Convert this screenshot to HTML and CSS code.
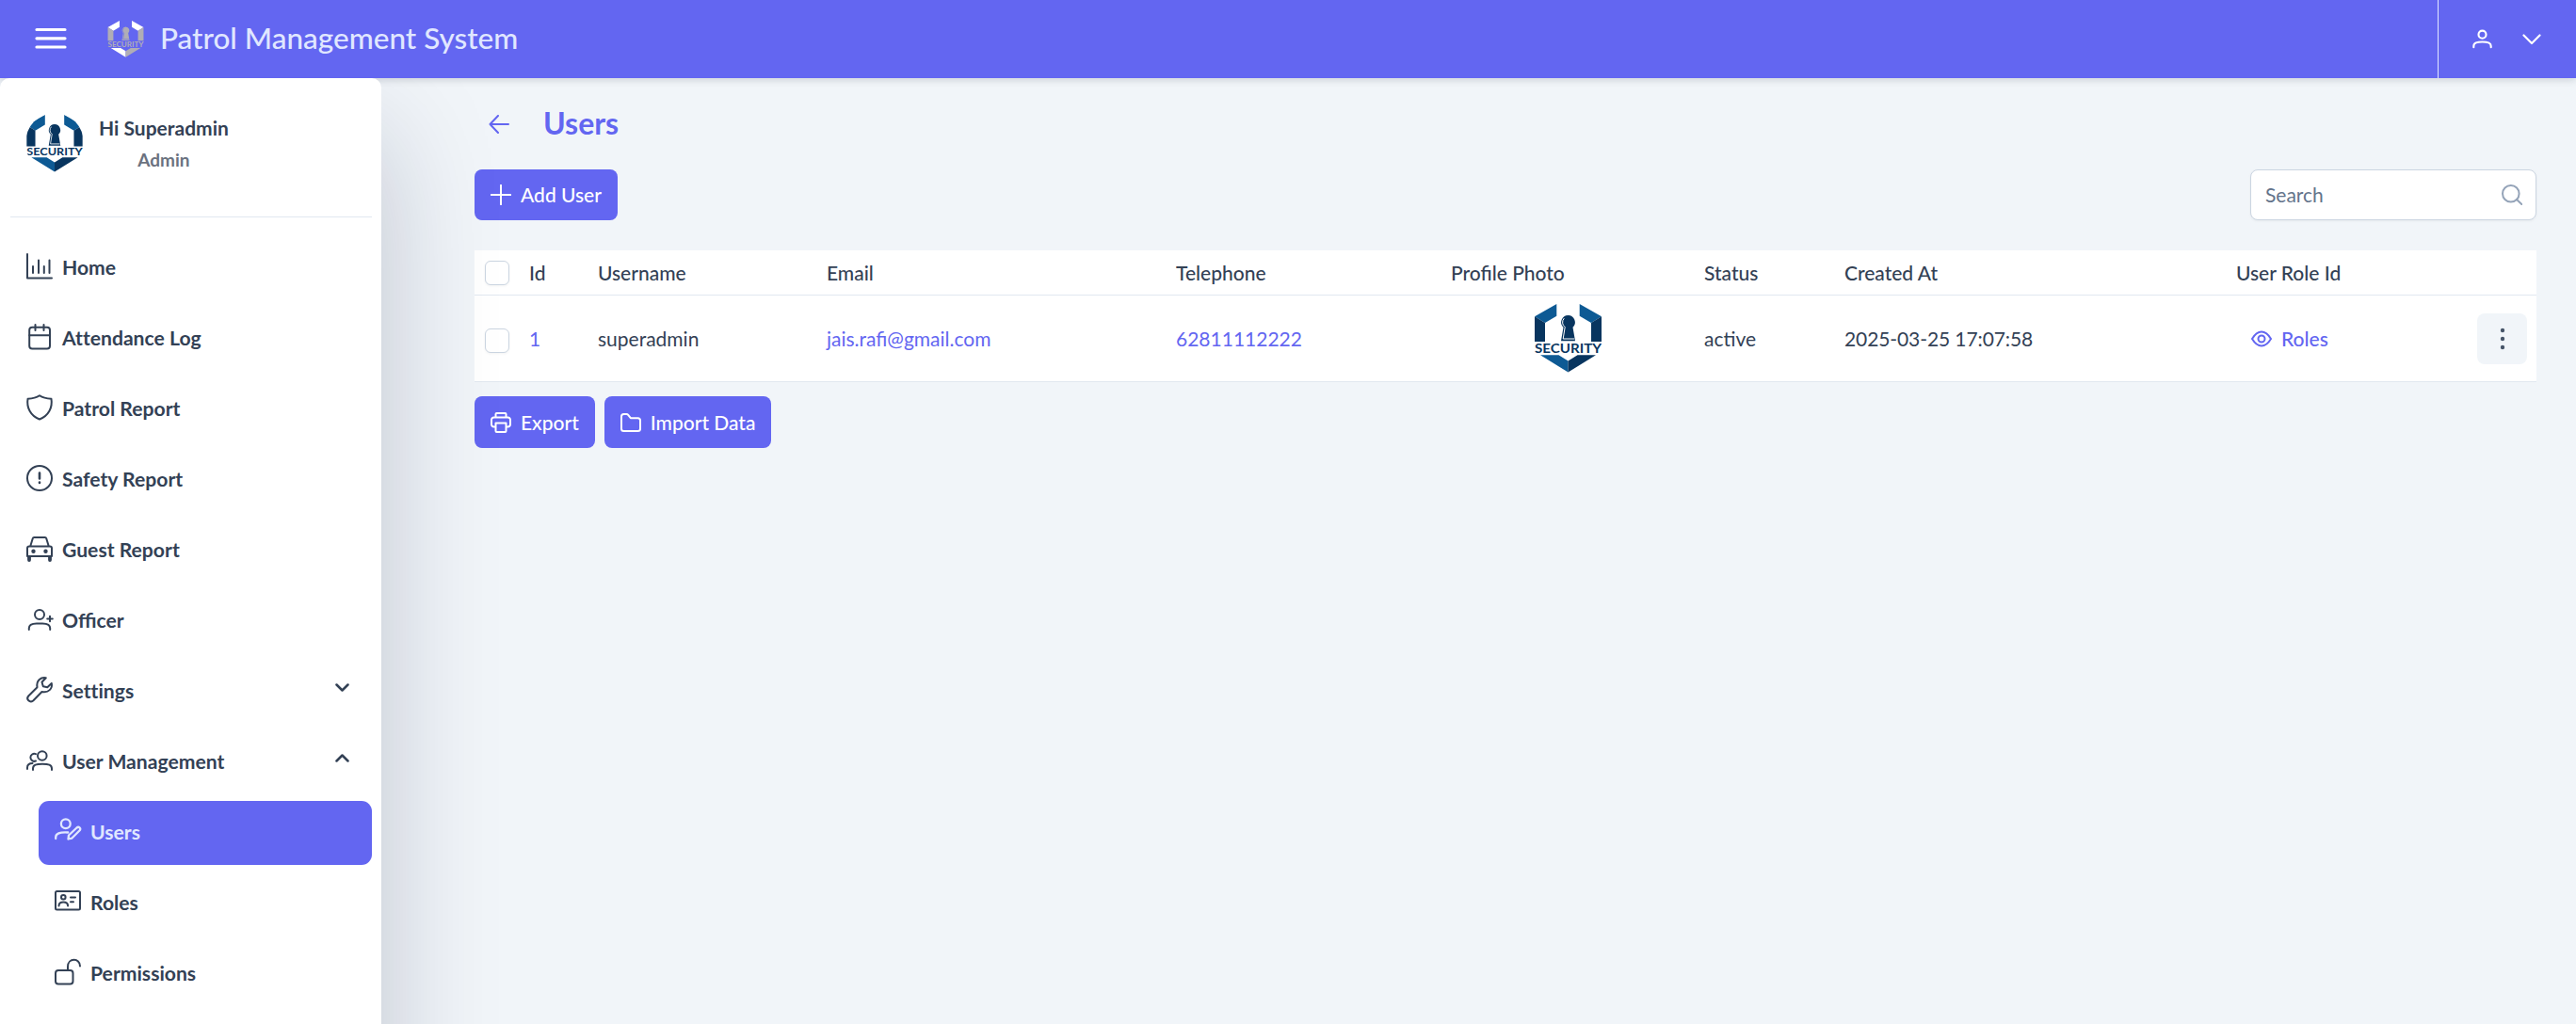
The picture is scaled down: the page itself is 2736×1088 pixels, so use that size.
FILE: index.html
```html
<!DOCTYPE html>
<html lang="en">
<head>
<meta charset="utf-8">
<title>Patrol Management System</title>
<link rel="stylesheet" href="styles.css">
</head>
<body>
<svg class="defs" width="0" height="0">
  <symbol id="logo" viewBox="0 0 71 73">
    <path class="lt" d="M0 13.3 23.3 0v12.7L11 20zM71 13.3 47.7 0v12.7L60 20zM6 54.3h19.5l10 6.2v12z"/>
    <path class="dk" d="M0 13.3 11 20v20H0zM71 13.3 60 20v20H71zM65 54.3H45.5l-10 6.2v12z"/>
    <path class="dk" d="M35.5 12a7.4 7.4 0 0 0-5 12.8L28 39.3h15l-2.5-14.5a7.4 7.4 0 0 0-5-12.8z"/>
    <path class="hl" d="M31 15.5a6 6 0 0 0 1.200 9L30.200 37h11.500"/>
    <text x="0" y="51.600" textLength="71" lengthAdjust="spacingAndGlyphs">SECURITY</text>
  </symbol>
</svg>

<header class="topbar">
  <button class="menu-btn"><svg viewBox="0 0 34 24"><path d="M2 2.500h30M2 11.800h30M2 21h30"/></svg></button>
  <svg class="brand-logo logo"><use href="#logo"/></svg>
  <span class="brand">Patrol Management System</span>
  <div class="account">
    <svg class="ic user" viewBox="0 0 24 24"><circle cx="12" cy="6.500" r="4.600"/><path d="M1.500 22v-1.500c0-4 4-5 10.500-5s10.500 1 10.500 5V22"/></svg>
    <svg class="ic down" viewBox="0 0 20 12"><path d="m1.500 1.500 8.500 8.500 8.500-8.500"/></svg>
  </div>
</header>

<div class="layout">
  <aside class="sidebar">
    <div class="profile">
      <div class="avatar"><svg class="logo"><use href="#logo"/></svg></div>
      <div class="who"><div class="hi">Hi Superadmin</div><div class="role">Admin</div></div>
    </div>
    <nav class="menu">
      <a class="item"><svg class="ic" viewBox="0 0 28 28"><path d="M1 1v25.500h26M7 14v7M13 7.500V21M18.800 14v7M24.500 7.500V21"/></svg><span>Home</span></a>
      <a class="item"><svg class="ic" viewBox="0 0 28 28"><rect x="3.200" y="3.800" width="21.800" height="22.700" rx="3"/><path d="M3.200 12.300H25M9.500 1v6M18.500 1v6"/></svg><span class="no-liga">Attendance Log</span></a>
      <a class="item"><svg class="ic" viewBox="0 0 28 28"><path d="M14 1.200C10.500 3.600 6 4.500 1.500 4.800 0 14 4.500 23 14 26.500 23.500 23 28 14 26.500 4.800 22 4.500 17.500 3.600 14 1.200z"/></svg><span>Patrol Report</span></a>
      <a class="item"><svg class="ic" viewBox="0 0 28 28"><circle cx="14" cy="14" r="13"/><path class="thick" d="M14 8.500v6M14 18.500v.5"/></svg><span>Safety Report</span></a>
      <a class="item"><svg class="ic" viewBox="0 0 28 28"><path d="M4.200 11.500 6.800 3q.300-1 1.400-1h11.600q1.100 0 1.400 1l2.600 8.500M3 11.500h22q2 0 2 2V22H1v-8.500q0-2 2-2z"/><path class="wheel" d="M3 23v3M25 23v3"/><circle class="dot" cx="7.500" cy="16.800" r="2.200"/><circle class="dot" cx="20.500" cy="16.800" r="2.200"/></svg><span>Guest Report</span></a>
      <a class="item"><svg class="ic" viewBox="0 0 28 28"><circle cx="14" cy="9" r="5"/><path d="M2.800 25v-1.500c0-3.600 3.500-5 8-5h6.400c4.500 0 8 1.400 8 5V25M25 10.800v5.400M22.200 13.500h5.600"/></svg><span>Officer</span></a>
      <a class="item"><svg class="ic" viewBox="0 0 28 28"><path d="M20.800 1.200c-5-1-10.500 2.500-9.300 10L2.200 20.500c-3 3.500 1.500 7.700 5 5l9.300-9.500c7 1.500 11.500-3.500 10.300-9l-4.500 4.300-4.500-1-1.300-4.500z"/></svg><span class="no-liga">Settings</span><svg class="caret" viewBox="0 0 15 9"><path d="m1.500 1.500 6 6 6-6"/></svg></a>
      <a class="item"><svg class="ic" viewBox="0 0 28 28"><circle cx="16.800" cy="9" r="4.800"/><path d="M7 24v-1.500c0-4 3.500-4.800 10-4.800s10 .8 10 4.800V24M10 7.200a4 4 0 1 0 0 7.300M1 23v-1.500c0-3 2-4.500 5.500-4.500"/></svg><span>User Management</span><svg class="caret" viewBox="0 0 15 9"><path d="m1.500 7.500 6-6 6 6"/></svg></a>
      <div class="submenu">
        <a class="item active"><svg class="ic" viewBox="0 0 28 28"><circle cx="11.800" cy="6.300" r="4.900"/><path d="M1.200 22v-1.500c0-4 4-5.500 13-5M14.500 22.500l.500-4 8.500-8c2.200-1.800 4.800.5 3.200 2.700l-8.500 8.500z"/></svg><span>Users</span></a>
        <a class="item"><svg class="ic" viewBox="0 0 28 28"><rect x="1" y="3" width="26" height="19.500" rx="1.500"/><circle cx="9.300" cy="9.200" r="2.300"/><path d="M4.500 18.500c0-3 1.500-4 4.800-4s4.800 1 4.800 4M17 9.500h5M17 14.200h3"/></svg><span>Roles</span></a>
        <a class="item"><svg class="ic" viewBox="0 0 28 28"><rect x="1" y="12" width="18.500" height="14.500" rx="3"/><path d="M14 12V8c0-9.500 13-9.500 13-.5"/></svg><span>Permissions</span></a>
      </div>
    </nav>
  </aside>

  <main class="content">
    <div class="page-head">
      <svg class="back" viewBox="0 0 22 20"><path d="M21 10H1.500M10 1 1.500 10l8.500 9"/></svg>
      <h1>Users</h1>
    </div>
    <div class="toolbar">
      <button class="btn"><svg class="ic" viewBox="0 0 22 22"><path d="M11 .8v20.400M.8 11h20.400"/></svg>Add User</button>
      <label class="search"><input type="text" placeholder="Search"><svg viewBox="0 0 22 22"><circle cx="9.800" cy="9.800" r="8.800"/><path d="m16 16 5.300 5"/></svg></label>
    </div>
    <table>
      <colgroup><col class="c0"><col class="c1"><col class="c2"><col class="c3"><col class="c4"><col class="c5"><col class="c6"><col class="c7"><col class="c8"><col class="c9"></colgroup>
      <thead><tr>
        <th><span class="check"></span></th><th>Id</th><th>Username</th><th>Email</th><th>Telephone</th><th>Profile Photo</th><th>Status</th><th>Created At</th><th>User Role Id</th><th></th>
      </tr></thead>
      <tbody><tr>
        <td><span class="check"></span></td>
        <td><a>1</a></td>
        <td>superadmin</td>
        <td><a>jais.rafi@gmail.com</a></td>
        <td><a>62811112222</a></td>
        <td><svg class="photo logo"><use href="#logo"/></svg></td>
        <td>active</td>
        <td class="date">2025-03-25 17:07:58</td>
        <td><a class="roles"><svg class="ic" viewBox="0 0 22 18"><path d="M1 9c3-5 6-7.500 10-7.500S18 4 21 9c-3 5-6 7.500-10 7.500S4 14 1 9z"/><circle cx="11" cy="9" r="3.500"/></svg>Roles</a></td>
        <td><button class="more"><svg viewBox="0 0 6 24"><circle cx="3" cy="3" r="2.200"/><circle cx="3" cy="12" r="2.200"/><circle cx="3" cy="21" r="2.200"/></svg></button></td>
      </tr></tbody>
    </table>
    <div class="actions">
      <button class="btn"><svg class="ic" viewBox="0 0 22 22"><path d="M5 15.500H3.500A2.500 2.500 0 0 1 1 13V8a2.500 2.500 0 0 1 2.500-2.500h15A2.500 2.500 0 0 1 21 8v5a2.500 2.500 0 0 1-2.500 2.500H17M5.500 5.500V2q0-1 1-1h9q1 0 1 1v3.500M5.500 11.500h11V20q0 1-1 1h-9q-1 0-1-1z"/></svg>Export</button>
      <button class="btn"><svg class="ic" viewBox="0 0 22 22"><path d="M1 17.500v-13Q1 2 3.500 2h3q1 0 1.700.9l2.600 3.300h7.700q2.500 0 2.500 2.500v8.800q0 2.500-2.500 2.500h-15Q1 20 1 17.500z"/></svg>Import Data</button>
    </div>
  </main>
</div>
</body>
</html>
```
FILE: styles.css
```css
* { box-sizing: border-box; }
html, body { height: 100%; }
body {
  margin: 0;
  overflow: hidden;
  display: flex;
  flex-direction: column;
  background: #f1f5f9;
  color: #334155;
  font: 400 21px/1.5 Lato, "Liberation Sans", sans-serif;
}
button, input { font: inherit; border: 0; }
svg { display: block; flex: none; fill: none; stroke: currentColor; stroke-width: 2; stroke-linecap: round; stroke-linejoin: round; }
.defs { display: none; }

/* logo */
.logo { --light: #0d5a94; --dark: #08355f; --shine: #fff; stroke: none; }
.lt { fill: var(--light); }
.dk { fill: var(--dark); }
.hl { fill: none; stroke: var(--shine); stroke-width: 1; }
symbol text { fill: var(--dark); font: 700 14px Lato, sans-serif; }

/* top bar */
.topbar {
  flex: none;
  height: 83px;
  display: flex;
  align-items: center;
  padding-left: 37px;
  background: #6366f1;
  color: #e0e7ff;
  box-shadow: 0 2px 8px rgba(15, 23, 42, .16);
  position: relative;
  z-index: 1;
}
.menu-btn { padding: 0; margin-right: 43px; background: none; color: #fff; }
.menu-btn svg { width: 34px; height: 24px; margin-bottom: 2px; stroke-width: 3.200; }
.brand-logo { --light: #fff; --dark: #b0adb5; --shine: #6366f1; width: 39px; height: 39px; margin: 0 17px 1px 0; }
.brand { font-size: 31.500px; font-weight: 500; line-height: 40px; padding-bottom: 4px; }
.account {
  margin-left: auto;
  width: 147px;
  height: 100%;
  border-left: 1px solid #e0e7ff;
  display: flex;
  align-items: center;
  gap: 31px;
  padding-left: 35px;
  color: #fff;
}
.account .user { width: 23px; height: 21px; stroke-width: 2.400; }
.account .down { width: 20px; height: 12px; stroke-width: 2.200; }

.layout { flex: 1; min-height: 0; display: flex; overflow: hidden; position: relative; z-index: 2; }

/* sidebar */
.sidebar {
  flex: none;
  width: 405px;
  height: 1200px;
  padding: 0 10px 0 11px;
  background: #fff;
  border-radius: 10px;
  box-shadow: 0 60px 125px rgba(15, 23, 60, .22);
  position: relative;
  z-index: 2;
}
.profile { height: 148px; display: flex; padding: 37px 0 0 16px; border-bottom: 1px solid #e2e8f0; }
.avatar { width: 62px; height: 64px; border-radius: 50%; overflow: hidden; }
.avatar svg { width: 60px; height: 61px; margin: 2px 1px 0; }
.who { margin: -1px 0 0 16px; text-align: center; font-weight: 700; line-height: 33px; }
.hi { font-size: 21px; }
.role { font-size: 19px; color: #6b7280; padding-top: 1px; }
.menu { padding-top: 20px; display: flex; flex-direction: column; gap: 7px; }
.item {
  height: 68px;
  display: flex;
  align-items: center;
  padding: 0 24px 0 17px;
  border-radius: 11px;
  font-size: 21.150px;
  font-weight: 700;
}
.item .ic { width: 28px; height: 28px; margin: -5px 10px 0 0; overflow: visible; }
.no-liga { font-variant-ligatures: none; }
.thick { stroke-width: 2.600; }
.wheel { stroke-width: 3.800; }
.dot { fill: currentColor; stroke: none; }
.caret { width: 15px; height: 9px; margin: -10px 0 0 auto; stroke-width: 2.500; }
.submenu { margin-left: 30px; display: flex; flex-direction: column; gap: 7px; }
.active { background: #6366f1; color: #e0e7ff; }
.active .ic { stroke-width: 2.300; }

/* content */
.content { flex: 1; padding: 26px 42px 0 99px; }
.page-head { display: flex; align-items: center; height: 46px; padding-left: 15px; color: #6366f1; }
.back { width: 22px; height: 20px; }
h1 { margin: 0 0 2px 36px; font-size: 32px; font-weight: 700; line-height: 44px; }
.toolbar { margin-top: 25px; display: flex; justify-content: space-between; }
.btn {
  height: 54px;
  padding: 0 17px;
  display: flex;
  align-items: center;
  border-radius: 8px;
  background: #6366f1;
  color: #fff;
  font-weight: 500;
}
.btn .ic { width: 22px; height: 22px; margin-right: 10px; }
.search {
  width: 304px;
  height: 54px;
  display: flex;
  align-items: center;
  padding: 0 14px 0 15px;
  background: #fff;
  border: 1px solid #cbd5e1;
  border-radius: 8px;
  box-shadow: 0 1px 3px rgba(18, 18, 23, .05);
}
.search input { flex: 1; min-width: 0; padding: 0; outline: 0; background: none; }
.search input::placeholder { color: #64748b; }
.search svg { width: 22px; height: 22px; color: #94a3b8; }

table { width: 2190px; margin-top: 32px; table-layout: fixed; border-collapse: separate; border-spacing: 0; background: #fff; }
.c0 { width: 48px; } .c1 { width: 73px; } .c2 { width: 243px; } .c3 { width: 371px; } .c4 { width: 292px; }
.c5 { width: 269px; } .c6 { width: 149px; } .c7 { width: 416px; } .c8 { width: 256px; } .c9 { width: 73px; }
th, td { padding: 0 10px; text-align: left; border-bottom: 1px solid #e2e8f0; line-height: 32px; }
th { height: 48px; font-weight: 500; }
td { height: 92px; }
td a { color: #6366f1; }
.date { letter-spacing: -.1px; }
.check { display: block; width: 26px; height: 26px; margin-left: 1px; border: 1px solid #cbd5e1; border-radius: 6px; background: #fff; box-shadow: 0 1px 3px rgba(18, 18, 23, .05); }
td .check { margin-top: 4px; }
.photo { width: 71px; height: 73px; margin-left: 89px; }
.roles { display: flex; align-items: center; padding-left: 16px; font-weight: 500; }
.roles svg { width: 22px; height: 18px; margin-right: 10px; }
.more { width: 53px; height: 54px; display: grid; place-items: center; padding: 0; border-radius: 8px; background: #f1f5f9; color: #475569; }
.more svg { width: 6px; height: 24px; fill: currentColor; stroke: none; }
.actions { display: flex; gap: 10px; margin-top: 15px; }
.actions .btn { height: 55px; }
```
